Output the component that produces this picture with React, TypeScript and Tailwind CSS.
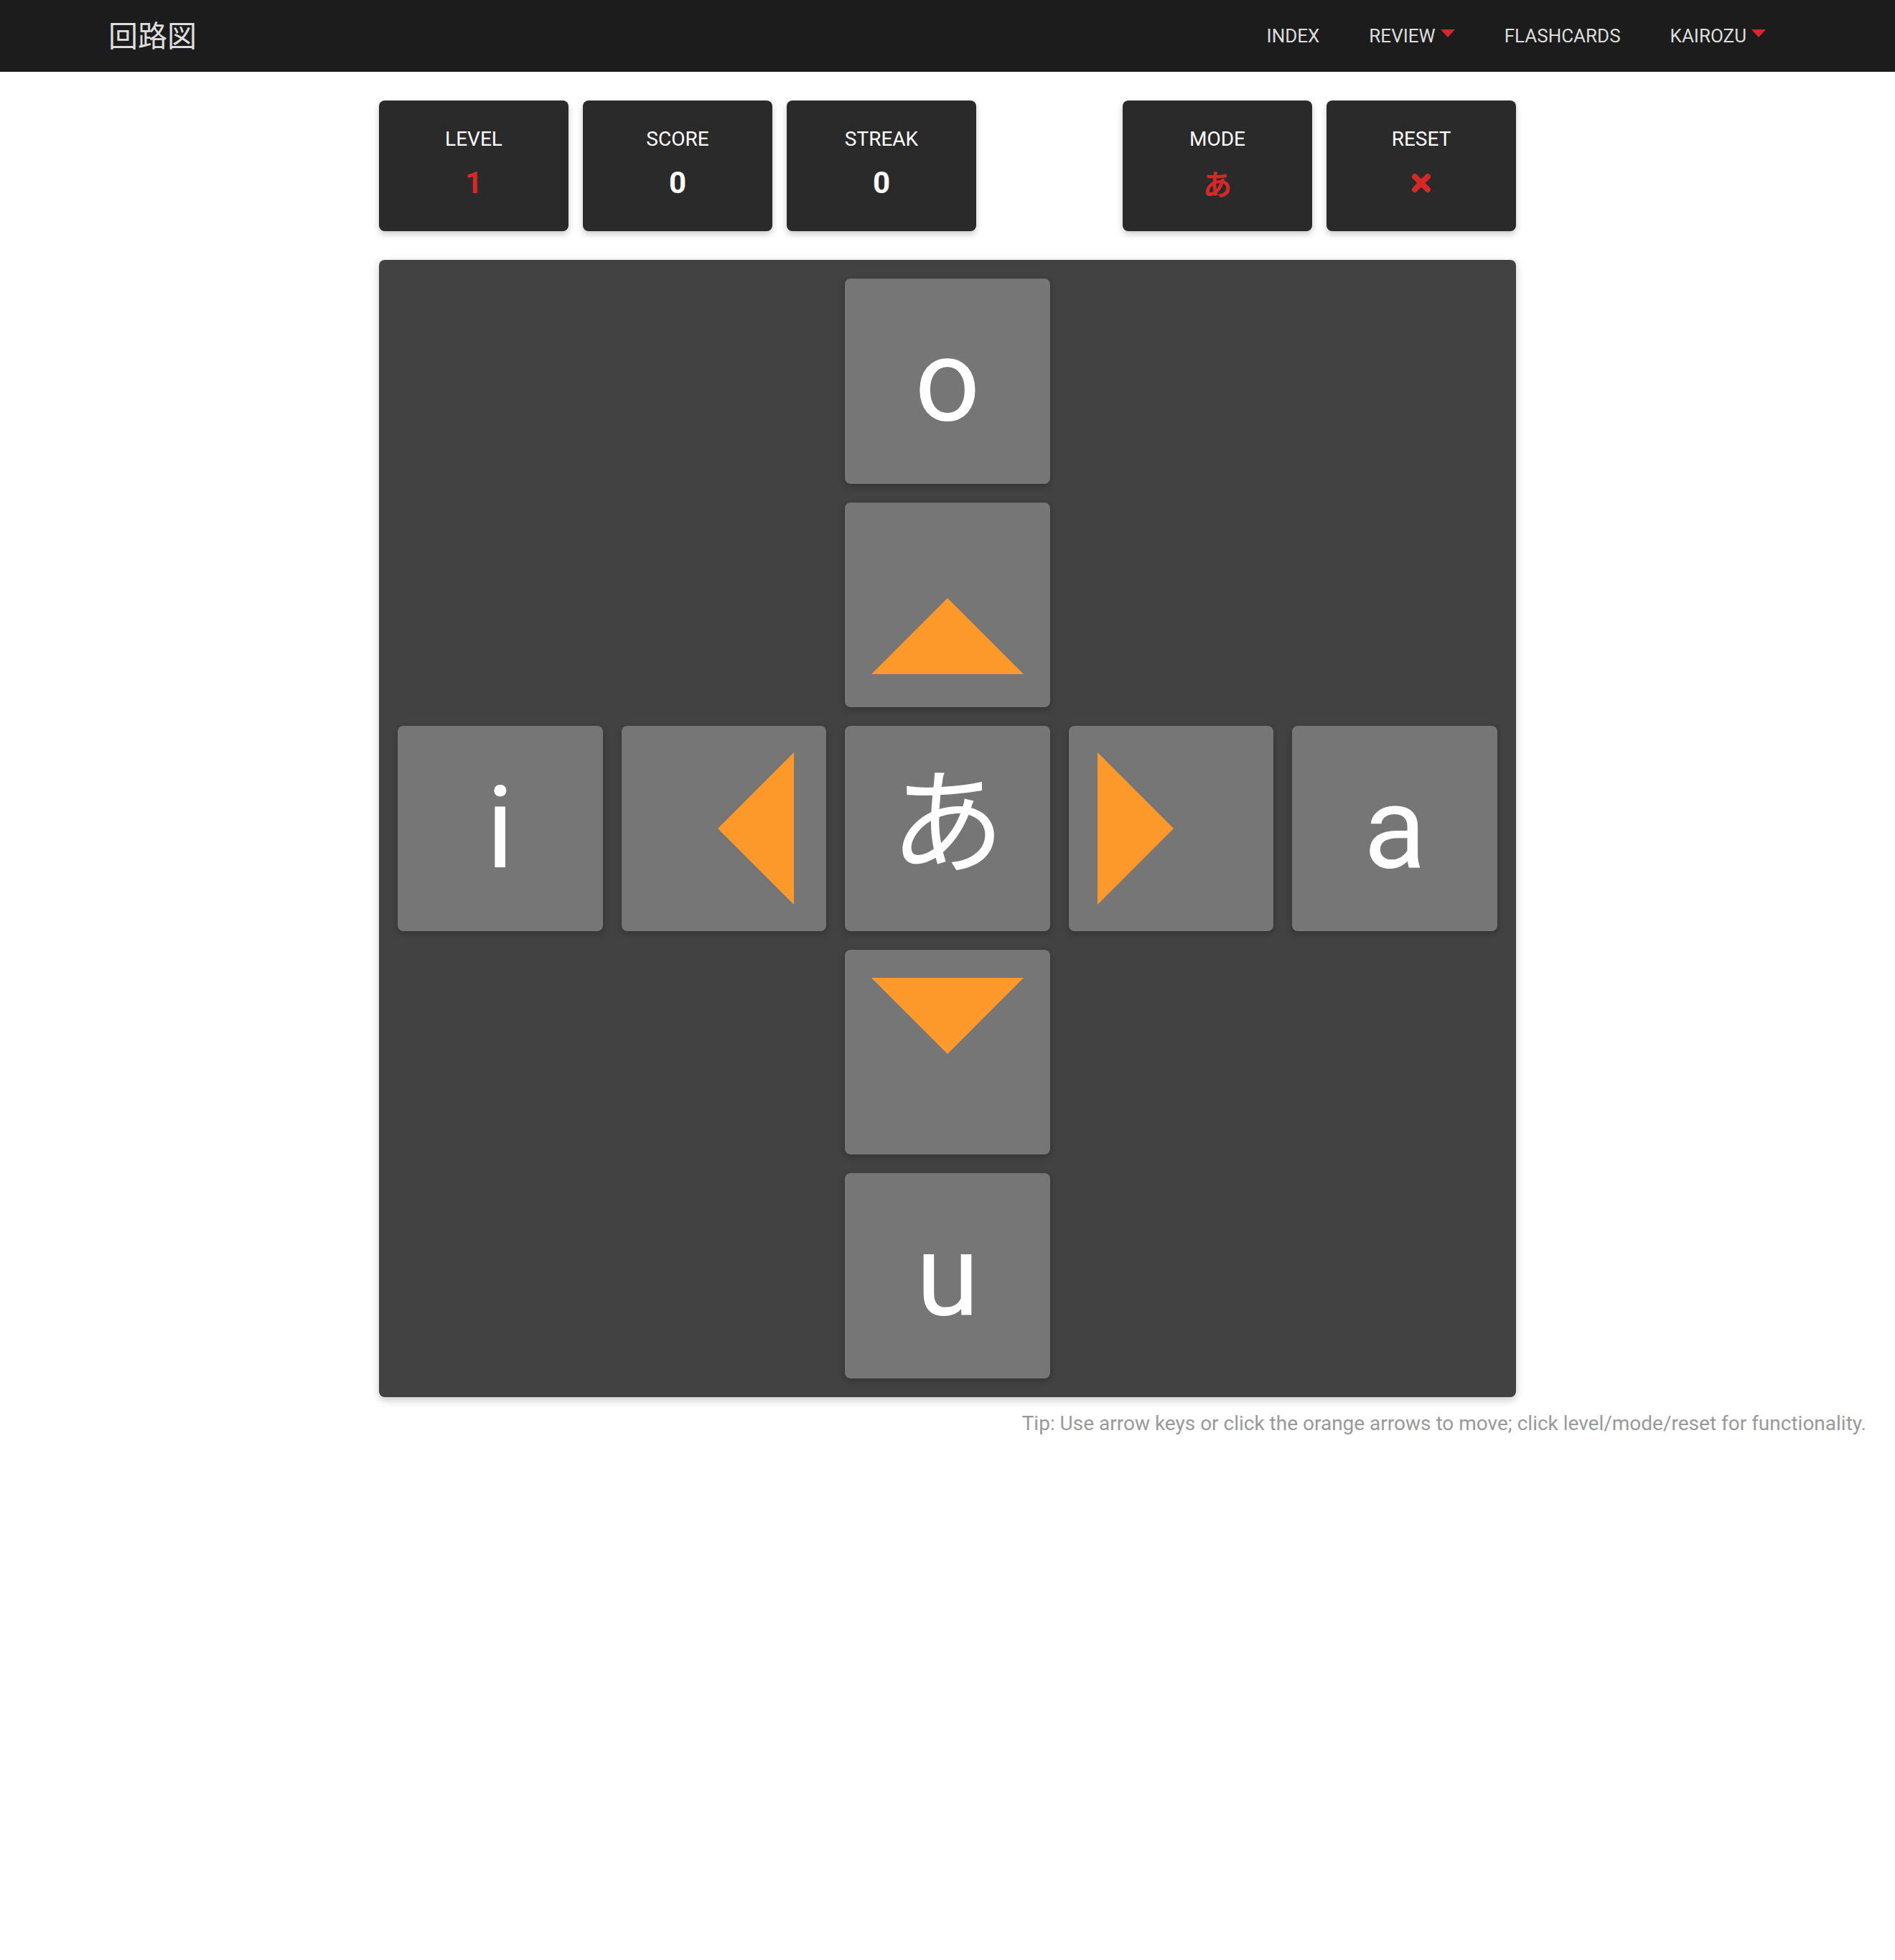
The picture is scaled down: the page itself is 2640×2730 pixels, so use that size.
import React from "react";

type StatCardProps = {
  label: string;
  children: React.ReactNode;
};

const StatCard: React.FC<StatCardProps> = ({ label, children }) => (
  <div className="w-[264px] h-[182px] rounded-lg bg-[#2a2a2a] shadow-[0_4px_10px_rgba(0,0,0,0.22)] flex flex-col items-center pt-[40px] cursor-pointer">
    <span className="text-[28px] leading-none text-white">{label}</span>
    <div className="mt-[26px] h-[42px] flex items-center text-[42px] leading-none font-bold">
      {children}
    </div>
  </div>
);

const Caret = () => (
  <svg width="20" height="11" viewBox="0 0 20 11" className="ml-[7px] mb-[7px]">
    <polygon points="0,0 20,0 10,11" fill="#d62828" />
  </svg>
);

const tile =
  "aspect-square rounded-lg bg-[#767676] shadow-[0_3px_8px_rgba(0,0,0,0.25)] flex";
const letter = `${tile} items-center justify-center text-[160px] leading-none text-white`;

const ORANGE = "#fd982a";

export default function App() {
  const navItems = [
    { name: "INDEX", menu: false },
    { name: "REVIEW", menu: true },
    { name: "FLASHCARDS", menu: false },
    { name: "KAIROZU", menu: true },
  ];

  return (
    <div className="min-h-screen bg-white font-['Roboto','Noto_Sans_CJK_JP',sans-serif]">
      <nav className="h-[100px] bg-[#1c1c1c] flex items-center justify-between pl-[151px] pr-[180px]">
        <div className="mb-[5px] text-[41px] leading-none text-[#dddddd] font-['Noto_Sans_CJK_JP',sans-serif]">
          回路図
        </div>
        <ul className="flex items-center gap-[69px]">
          {navItems.map((item) => (
            <li
              key={item.name}
              className="flex items-center text-[26px] leading-none text-[#dddddd] cursor-pointer"
            >
              {item.name}
              {item.menu && <Caret />}
            </li>
          ))}
        </ul>
      </nav>

      <main className="w-[1584px] mx-auto pt-[40px]">
        <div className="flex justify-between">
          <div className="flex gap-[20px]">
            <StatCard label="LEVEL">
              <span className="text-[#d62828]">1</span>
            </StatCard>
            <StatCard label="SCORE">
              <span className="text-white">0</span>
            </StatCard>
            <StatCard label="STREAK">
              <span className="text-white">0</span>
            </StatCard>
          </div>
          <div className="flex gap-[20px]">
            <StatCard label="MODE">
              <span className="text-[#d62828] text-[40px] font-['Noto_Sans_CJK_JP',sans-serif] font-bold">
                あ
              </span>
            </StatCard>
            <StatCard label="RESET">
              <svg width="28" height="28" viewBox="0 0 28 28">
                <line x1="5" y1="5" x2="23" y2="23" stroke="#d62828" strokeWidth="8" strokeLinecap="round" />
                <line x1="23" y1="5" x2="5" y2="23" stroke="#d62828" strokeWidth="8" strokeLinecap="round" />
              </svg>
            </StatCard>
          </div>
        </div>

        <div className="mt-[40px] rounded-lg bg-[#424242] p-[26px] grid grid-cols-5 gap-[26px] shadow-[0_4px_12px_rgba(0,0,0,0.22)]">
          {/* row 1 */}
          <div className={`${letter} col-start-3`}>o</div>
          {/* row 2 */}
          <div className={`${tile} col-start-3 items-end justify-center pb-[46px] cursor-pointer`}>
            <svg width="212" height="106" viewBox="0 0 212 106">
              <polygon points="106,0 212,106 0,106" fill={ORANGE} />
            </svg>
          </div>
          {/* row 3 */}
          <div className={`${letter} col-start-1`}>i</div>
          <div className={`${tile} items-center justify-end pr-[45px] cursor-pointer`}>
            <svg width="106" height="212" viewBox="0 0 106 212">
              <polygon points="0,106 106,0 106,212" fill={ORANGE} />
            </svg>
          </div>
          <div className={`${letter} pb-[40px] font-['Noto_Sans_CJK_JP',sans-serif] text-[152px]`}>あ</div>
          <div className={`${tile} items-center justify-start pl-[40px] cursor-pointer`}>
            <svg width="106" height="212" viewBox="0 0 106 212">
              <polygon points="106,106 0,0 0,212" fill={ORANGE} />
            </svg>
          </div>
          <div className={letter}>a</div>
          {/* row 4 */}
          <div className={`${tile} col-start-3 items-start justify-center pt-[39px] cursor-pointer`}>
            <svg width="212" height="106" viewBox="0 0 212 106">
              <polygon points="0,0 212,0 106,106" fill={ORANGE} />
            </svg>
          </div>
          {/* row 5 */}
          <div className={`${letter} col-start-3`}>u</div>
        </div>
      </main>

      <p className="mt-[17px] pr-[40px] text-right text-[28px] leading-[40px] text-[#999999]">
        Tip: Use arrow keys or click the orange arrows to move; click level/mode/reset for functionality.
      </p>
    </div>
  );
}
